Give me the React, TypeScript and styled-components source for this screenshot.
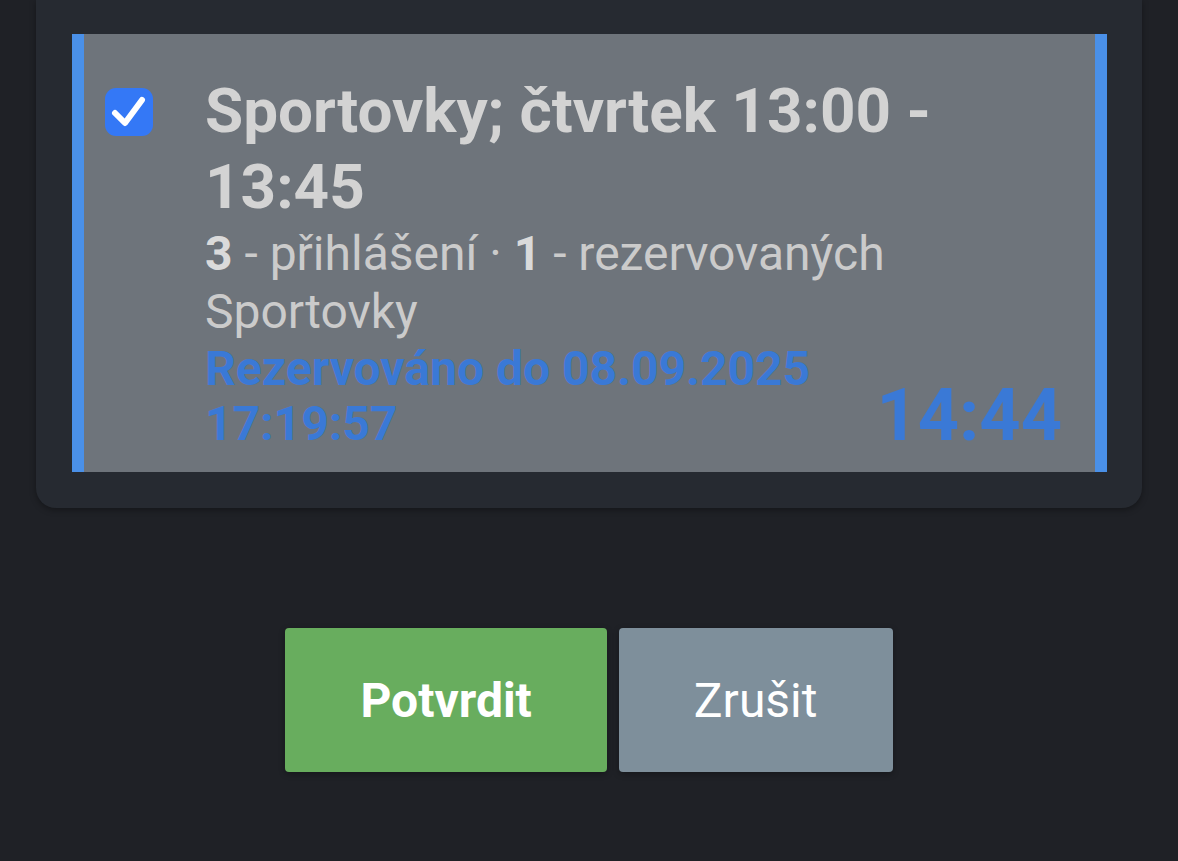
import styled, { createGlobalStyle } from "styled-components";

const GlobalStyle = createGlobalStyle`
  html, body {
    margin: 0;
    padding: 0;
    background: #1f2126;
    font-family: Roboto, "Noto Sans", "Liberation Sans", sans-serif;
  }
`;

const Page = styled.div`
  min-height: 100vh;
  display: flex;
  flex-direction: column;
  align-items: stretch;
`;

const Panel = styled.div`
  margin: 0 36px;
  padding: 34px 35px 36px 36px;
  background: #262a31;
  border-radius: 0 0 20px 20px;
  box-shadow: 0 2px 6px rgba(0, 0, 0, 0.35);
`;

const Slot = styled.div<{ selected: boolean }>`
  display: flex;
  align-items: flex-start;
  gap: 52px;
  padding: 39px 33px 21px 21px;
  background: #6e747b;
  border-left: 12px solid ${(p) => (p.selected ? "#4a90e8" : "transparent")};
  border-right: 12px solid ${(p) => (p.selected ? "#4a90e8" : "transparent")};
`;

const Check = styled.div`
  flex: none;
  width: 48px;
  height: 48px;
  margin-top: 15px;
  border-radius: 11px;
  background: #3478f6;
  display: flex;
`;

const Body = styled.div`
  flex: 1;
  min-width: 0;
`;

const Title = styled.div`
  font-size: 62px;
  font-weight: 700;
  line-height: 76px;
  color: #d3d3d3;
`;

const Info = styled.div`
  font-size: 48px;
  line-height: 58px;
  color: #cbcbcb;

  b {
    font-weight: 700;
    color: #dadada;
  }
`;

const Footer = styled.div`
  display: flex;
  align-items: flex-end;
  justify-content: space-between;
`;

const Reserved = styled.div`
  font-size: 48px;
  font-weight: 700;
  line-height: 55px;
  color: #3a79d6;
`;

const Countdown = styled.div`
  font-size: 72px;
  font-weight: 700;
  line-height: 71px;
  color: #3a79d6;
`;

const Actions = styled.div`
  display: flex;
  justify-content: center;
  gap: 12px;
  margin-top: 120px;
`;

const Button = styled.button<{ variant: "primary" | "secondary" }>`
  height: 144px;
  padding: 0 75px;
  border: none;
  border-radius: 4px;
  font-family: Roboto, "Noto Sans", "Liberation Sans", sans-serif;
  font-size: 48px;
  font-weight: ${(p) => (p.variant === "primary" ? 700 : 400)};
  color: #ffffff;
  background: ${(p) => (p.variant === "primary" ? "#68ad5e" : "#7e8f9b")};
  box-shadow: 0 2px 6px rgba(0, 0, 0, 0.3);
  cursor: pointer;
`;

export default function App() {
  return (
    <Page>
      <GlobalStyle />
      <Panel>
        <Slot selected>
          <Check>
            <svg width="48" height="48" viewBox="0 0 48 48" fill="none">
              <path
                d="M10 25l10 10L37 12"
                stroke="#ffffff"
                strokeWidth="6"
                strokeLinecap="round"
                strokeLinejoin="round"
              />
            </svg>
          </Check>
          <Body>
            <Title>Sportovky; čtvrtek 13:00 - 13:45</Title>
            <Info>
              <b>3</b> - přihlášení · <b>1</b> - rezervovaných
            </Info>
            <Info>Sportovky</Info>
            <Footer>
              <Reserved>
                Rezervováno do 08.09.2025
                <br />
                17:19:57
              </Reserved>
              <Countdown>14:44</Countdown>
            </Footer>
          </Body>
        </Slot>
      </Panel>
      <Actions>
        <Button variant="primary">Potvrdit</Button>
        <Button variant="secondary">Zrušit</Button>
      </Actions>
    </Page>
  );
}
